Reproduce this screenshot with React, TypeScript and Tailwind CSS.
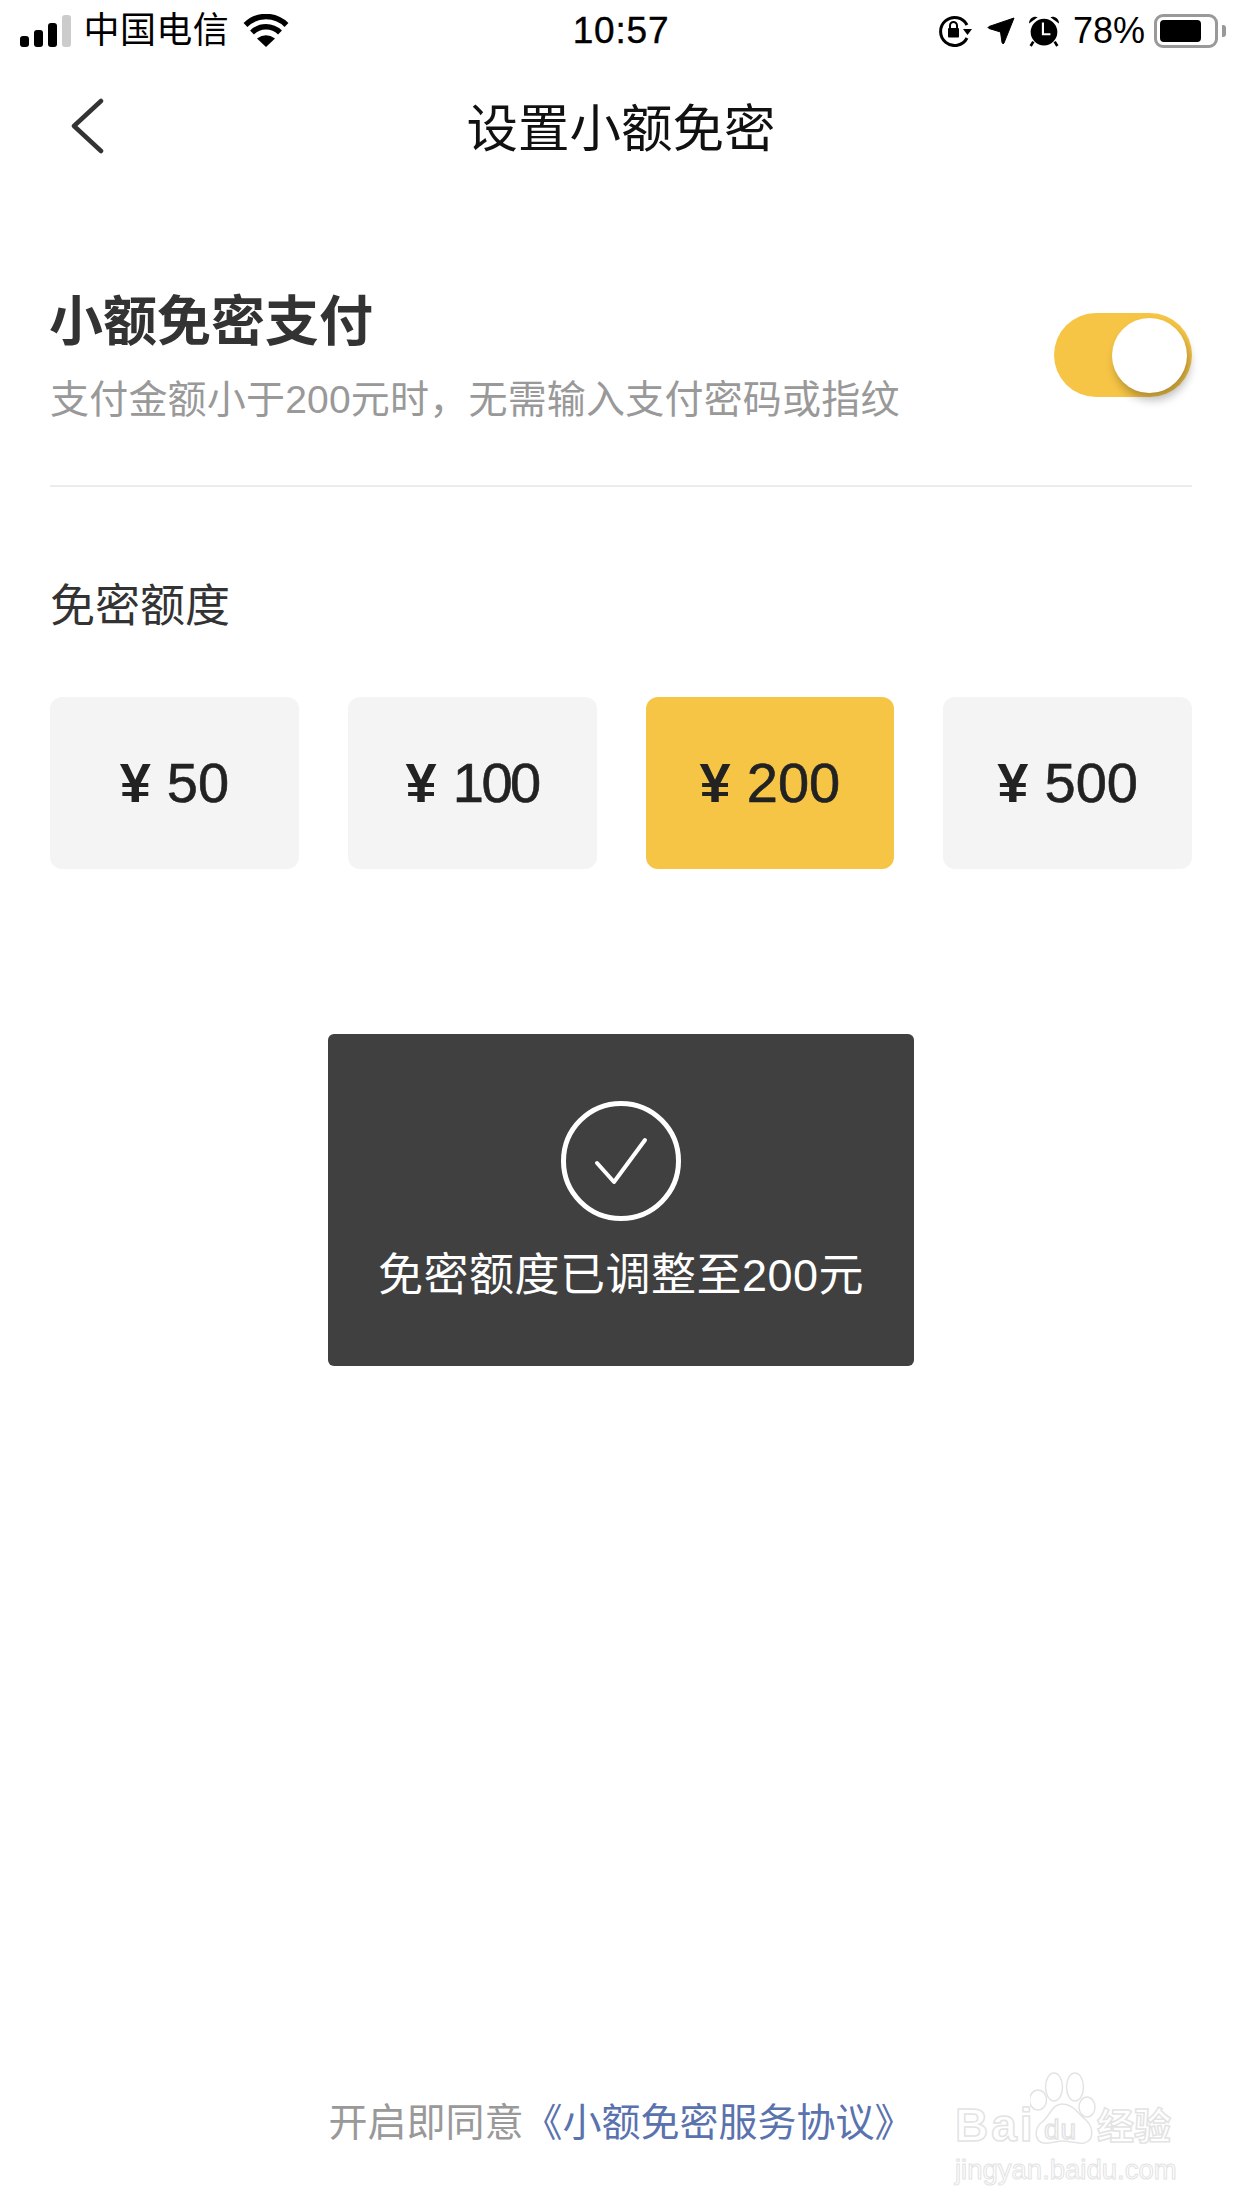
const amounts = [
  { prefix: "¥", value: "50", active: false, tracking: "" },
  { prefix: "¥", value: "100", active: false, tracking: "tracking-[-2.5px]" },
  { prefix: "¥", value: "200", active: true, tracking: "" },
  { prefix: "¥", value: "500", active: false, tracking: "" },
];

function StatusBar() {
  return (
    <div className="grid h-[62px] grid-cols-[1fr_auto_1fr] items-center text-black">
      <div className="flex items-center">
        <div className="ml-[20px] flex items-end gap-[5.5px] pb-[1px]">
          <span className="h-[11px] w-[8.5px] rounded-[3px] bg-black" />
          <span className="h-[17px] w-[8.5px] rounded-[3px] bg-black" />
          <span className="h-[24px] w-[8.5px] rounded-[3px] bg-black" />
          <span className="h-[32px] w-[8.5px] rounded-[3px] bg-[#cccccc]" />
        </div>
        <span className="ml-[13px] text-[36px] leading-[44px] tracking-[0.4px]">中国电信</span>
        <svg width="46" height="33" viewBox="0 0 46 33" className="ml-[14px] mb-[2px]" fill="none" stroke="black">
          <path d="M2.5 11 A29 29 0 0 1 43.5 11" strokeWidth="5.5" />
          <path d="M9 18.5 A20 20 0 0 1 37 18.5" strokeWidth="5.5" />
          <path d="M23 33 L14 24.5 Q23 18 32 24.5 Z" fill="black" stroke="none" />
        </svg>
      </div>
      <span className="text-[37px] leading-[44px] tracking-[0.8px] [-webkit-text-stroke:0.4px_black]">10:57</span>
      <div className="flex items-center justify-end">
        <svg width="34" height="32" viewBox="0 0 34 32" fill="none">
          <path d="M28 10 A14 14 0 1 0 28 23" stroke="black" strokeWidth="3" />
          <path d="M24 14 H33 L28.500 20 Z" fill="black" />
          <rect x="9" y="13" width="11" height="9.500" rx="1" fill="black" />
          <path d="M11 13 V10.500 A3.500 3.500 0 0 1 18 10.500 V13" stroke="black" strokeWidth="2" />
        </svg>
        <svg width="28" height="28" viewBox="0 0 28 28" className="ml-[14px]">
          <path d="M27 1 L17 26 Q16 28 15 25.500 L13.500 15 L2 11.500 Q0 10.500 2 9.500 Z" fill="black" stroke="black" strokeLinejoin="round" />
        </svg>
        <svg width="32" height="32" viewBox="0 0 30 30" className="ml-[13px]">
          <path d="M1 8 A6 6 0 0 1 9 2 Z" fill="black" />
          <path d="M29 8 A6 6 0 0 0 21 2 Z" fill="black" />
          <circle cx="15" cy="16" r="12.500" fill="black" />
          <path d="M5 25 L2.500 29 M25 25 L27.500 29" stroke="black" strokeWidth="2.500" />
          <path d="M14 7 V18 H21" stroke="white" strokeWidth="2" fill="none" />
        </svg>
        <span className="ml-[13px] font-light text-[36px] leading-[44px]">78%</span>
        <div className="ml-[9px] flex h-[34px] w-[64px] items-center rounded-[9px] border-[3px] border-[#999999] pl-[3px]">
          <span className="h-[22px] w-[41px] rounded-[4px] bg-black" />
        </div>
        <span className="ml-[4px] mr-[16px] h-[12px] w-[4px] rounded-r-[3px] bg-[#999999]" />
      </div>
    </div>
  );
}

function NavBar() {
  return (
    <div className="relative flex h-[130px] items-center justify-center">
      <svg width="34" height="58" viewBox="0 0 34 58" fill="none" className="absolute left-[70px] top-[36px]">
        <path d="M31 3 L4 28 L31 53" stroke="#333333" strokeWidth="4.500" strokeLinecap="round" strokeLinejoin="round" />
      </svg>
      <h1 className="pt-[3px] text-[51.5px] font-normal leading-[60px] text-[#111111]">设置小额免密</h1>
    </div>
  );
}

function Toggle() {
  return (
    <div className="mt-[21px] flex h-[84px] w-[138px] items-center justify-end rounded-full bg-[#f6c545] pr-[5px]">
      <span className="h-[75px] w-[75px] rounded-full bg-white shadow-[3px_7px_10px_rgba(0,0,0,0.28)]" />
    </div>
  );
}

function Toast() {
  return (
    <div className="mx-auto mt-[165px] flex h-[332px] w-[586px] flex-col items-center rounded-[6px] bg-[#404040] pt-[67px] text-white">
      <svg width="120" height="120" viewBox="0 0 120 120" fill="none" stroke="white" strokeLinecap="round" strokeLinejoin="round">
        <circle cx="60" cy="60" r="57.500" strokeWidth="5" />
        <path d="M36 62 L53 81 L84 39" strokeWidth="4" />
      </svg>
      <p className="mt-[25px] text-[45px] leading-[60px] tracking-[0.5px]">免密额度已调整至200元</p>
    </div>
  );
}

function Watermark() {
  const outline = "absolute text-transparent [-webkit-text-stroke:1.5px_#e3e3e3]";
  return (
    <div className="pointer-events-none absolute left-[955px] top-[2070px] h-[115px] w-[225px] font-bold">
      <span className={`${outline} left-0 top-[29px] text-[46px] leading-[52px] tracking-[3px]`}>Bai</span>
      <svg width="70" height="76" viewBox="0 0 70 76" fill="white" stroke="#e3e3e3" strokeWidth="1.500" className="absolute left-[75px] top-0">
        <ellipse cx="8" cy="30" rx="8.500" ry="10" />
        <ellipse cx="24" cy="17" rx="8.500" ry="14" />
        <ellipse cx="45" cy="17" rx="8.500" ry="14" />
        <ellipse cx="57" cy="37" rx="8" ry="10" />
        <path d="M32 34 C22 34 20 46 12 52 C4 58 4 72 14 73 C22 74 26 71 33 71 C40 71 46 74 54 73 C64 71 64 58 56 50 C48 44 44 34 32 34 Z" />
      </svg>
      <span className={`${outline} left-[89px] top-[45px] text-[28px] font-normal leading-[30px] tracking-[1px]`}>du</span>
      <span className={`${outline} left-[142px] top-[38px] text-[37px] leading-[40px]`}>经验</span>
      <span className={`${outline} left-0 top-[82px] text-[27.5px] font-normal leading-[36px] [-webkit-text-stroke:1px_#e3e3e3]`}>jingyan.baidu.com</span>
    </div>
  );
}

export default function App() {
  return (
    <div className="relative flex h-[2208px] w-[1242px] flex-col overflow-hidden bg-white font-['Liberation_Sans','Noto_Sans_CJK_SC',sans-serif]">
      <StatusBar />
      <NavBar />

      <section className="mx-[50px] flex items-start justify-between border-b-2 border-[#ececec] pt-[100px] pb-[61px]">
        <div>
          <h2 className="-ml-[1px] text-[54px] font-bold leading-[60px] text-[#333333]">小额免密支付</h2>
          <p className="mt-[24px] text-[39px] leading-[48px] tracking-[0.2px] text-[#999999]">支付金额小于200元时，无需输入支付密码或指纹</p>
        </div>
        <Toggle />
      </section>

      <h3 className="ml-[50px] mt-[90px] text-[45px] font-normal leading-[60px] text-[#333333]">免密额度</h3>

      <div className="mx-[50px] mt-[60px] grid grid-cols-4 gap-[49px]">
        {amounts.map((item) => (
          <div
            key={item.value}
            className={
              item.active
                ? "flex h-[172px] items-center justify-center rounded-[12px] bg-[#f6c545] text-[56px] text-[#222222]"
                : "flex h-[172px] items-center justify-center rounded-[12px] bg-[#f4f4f4] text-[56px] text-[#222222]"
            }
          >
            <span className="font-bold">{item.prefix}</span>
            <span className={`ml-[16px] [-webkit-text-stroke:0.6px_#222222] ${item.tracking}`}>{item.value}</span>
          </div>
        ))}
      </div>

      <Toast />

      <p className="mt-auto mb-[60px] text-center text-[39px] leading-[50px] text-[#999999]">
        开启即同意<span className="text-[#5a72ad]">《小额免密服务协议》</span>
      </p>

      <Watermark />
    </div>
  );
}
